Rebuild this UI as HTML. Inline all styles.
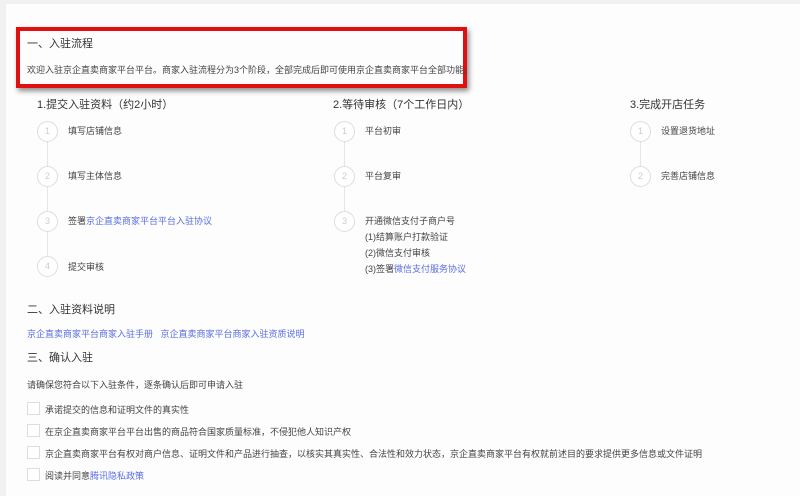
<!DOCTYPE html>
<html><head><meta charset="utf-8"><style>
body{margin:0;width:800px;height:496px;background:#fdfdfd;font-family:"Liberation Sans","Noto Sans CJK SC",sans-serif;color:#333;position:relative;overflow:hidden}
.a{position:absolute;white-space:nowrap}
.s{font-size:9px;color:#444}
.h{font-size:11px;color:#333}
.k{font-size:11px;color:#333}
.l{color:#5a6ee0}
.c{position:absolute;width:19px;height:19px;border:1px solid #ddd;border-radius:50%;background:#fff;color:#ccc;font-size:9px;text-align:center;line-height:19px}
.v{position:absolute;width:1px;background:#e6e6e6}
.cb{position:absolute;left:27px;width:11px;height:11px;border:1px solid #ddd;background:#fff}
</style></head><body>
<div class="a" style="left:0;top:0;width:800px;height:4px;background:#f1f1f1"></div>
<div class="a" style="left:0;top:0;width:6px;height:496px;background:#f1f1f1"></div>
<div class="a" style="left:16px;top:27px;width:443px;height:53px;border:4px solid #e01010;box-shadow:2px 3px 5px rgba(0,0,0,.45)"></div>
<div class="a h" style="left:27px;top:35px">一、入驻流程</div>
<div class="a s" style="left:27px;top:63px">欢迎入驻京企直卖商家平台平台。商家入驻流程分为3个阶段，全部完成后即可使用京企直卖商家平台全部功能。</div>

<div class="a k" style="left:37px;top:96px">1.提交入驻资料（约2小时）</div>
<div class="v" style="left:47px;top:131px;height:135px"></div>
<div class="c" style="left:37px;top:121px">1</div>
<div class="c" style="left:37px;top:166px">2</div>
<div class="c" style="left:37px;top:211px">3</div>
<div class="c" style="left:37px;top:256px">4</div>
<div class="a s" style="left:68px;top:124px">填写店铺信息</div>
<div class="a s" style="left:68px;top:169px">填写主体信息</div>
<div class="a s" style="left:68px;top:214px">签署<span class="l">京企直卖商家平台平台入驻协议</span></div>
<div class="a s" style="left:68px;top:260px">提交审核</div>

<div class="a k" style="left:333px;top:96px">2.等待审核（7个工作日内）</div>
<div class="v" style="left:344px;top:131px;height:90px"></div>
<div class="c" style="left:334px;top:121px">1</div>
<div class="c" style="left:334px;top:166px">2</div>
<div class="c" style="left:334px;top:211px">3</div>
<div class="a s" style="left:365px;top:124px">平台初审</div>
<div class="a s" style="left:365px;top:169px">平台复审</div>
<div class="a s" style="left:365px;top:214px">开通微信支付子商户号</div>
<div class="a s" style="left:365px;top:230px">(1)结算账户打款验证</div>
<div class="a s" style="left:365px;top:246px">(2)微信支付审核</div>
<div class="a s" style="left:365px;top:262px">(3)签署<span class="l">微信支付服务协议</span></div>

<div class="a k" style="left:630px;top:96px">3.完成开店任务</div>
<div class="v" style="left:640px;top:131px;height:45px"></div>
<div class="c" style="left:630px;top:121px">1</div>
<div class="c" style="left:630px;top:166px">2</div>
<div class="a s" style="left:661px;top:124px">设置退货地址</div>
<div class="a s" style="left:661px;top:169px">完善店铺信息</div>

<div class="a h" style="left:27px;top:301px">二、入驻资料说明</div>
<div class="a s l" style="left:27px;top:327px">京企直卖商家平台商家入驻手册&nbsp;&nbsp;&nbsp;京企直卖商家平台商家入驻资质说明</div>
<div class="a h" style="left:27px;top:349px">三、确认入驻</div>
<div class="a s" style="left:27px;top:378px">请确保您符合以下入驻条件，逐条确认后即可申请入驻</div>
<div class="cb" style="top:402px"></div>
<div class="cb" style="top:424px"></div>
<div class="cb" style="top:446px"></div>
<div class="cb" style="top:468px"></div>
<div class="a s" style="left:45px;top:403px">承诺提交的信息和证明文件的真实性</div>
<div class="a s" style="left:45px;top:425px">在京企直卖商家平台平台出售的商品符合国家质量标准，不侵犯他人知识产权</div>
<div class="a s" style="left:45px;top:447px">京企直卖商家平台有权对商户信息、证明文件和产品进行抽查，以核实其真实性、合法性和效力状态，京企直卖商家平台有权就前述目的要求提供更多信息或文件证明</div>
<div class="a s" style="left:45px;top:469px">阅读并同意<span class="l">腾讯隐私政策</span></div>
</body></html>
